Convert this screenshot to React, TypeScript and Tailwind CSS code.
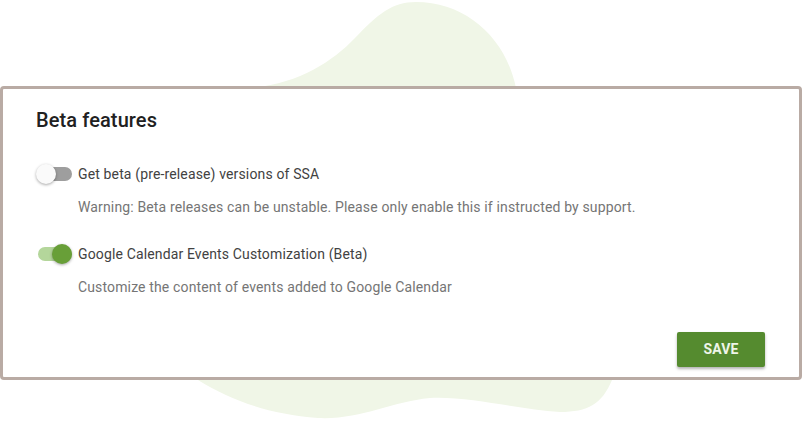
import React, { useState } from 'react';

function Toggle({ on, onChange }: { on: boolean; onChange: () => void }) {
  return (
    <button
      type="button"
      onClick={onChange}
      className="relative w-[36px] h-[20px] flex items-center shrink-0"
    >
      <span className={`absolute left-[2px] right-0 h-[14px] rounded-full ${on ? 'bg-[#b4d69b]' : 'bg-[#9e9e9e]'}`} />
      <span
        className={`absolute top-0 w-[20px] h-[20px] rounded-full shadow-[0_1px_3px_rgba(0,0,0,0.35)] ${on ? 'left-[16px] bg-[#689f38]' : 'left-0 bg-[#fafafa]'}`}
      />
    </button>
  );
}

export default function App() {
  const [beta, setBeta] = useState(false);
  const [calendar, setCalendar] = useState(true);

  return (
    <div className="relative w-[803px] h-[425px] bg-white overflow-hidden" style={{ fontFamily: 'Roboto, "Liberation Sans", sans-serif' }}>
      {/* background blob */}
      <svg className="absolute inset-0" width="803" height="425" viewBox="0 0 803 425">
        <path
          d="M250 88 C298 84 332 62 355 38 C378 14 392 2 416 2 C466 2 506 38 516 88 L612 380 C602 404 588 412 560 412 C520 410 470 396 430 398 C390 402 360 420 318 418 C268 414 230 400 198 380 Z"
          fill="#f0f6e7"
        />
      </svg>

      <div className="relative pt-[86px] pr-[1px]">
        <div className="bg-white border-[3px] border-[#b9aba4] rounded-[4px] h-[294px] px-[33px] pt-[17px] flex flex-col tracking-[0.14px]">
          <h2 className="text-[20px] leading-[28px] font-medium text-[#212121] tracking-[0.1px]">Beta features</h2>

          <div className="mt-[30px] flex items-center gap-[6px]">
            <Toggle on={beta} onChange={() => setBeta(!beta)} />
            <span className="text-[14px] leading-[20px] text-[#424242]">Get beta (pre-release) versions of SSA</span>
          </div>
          <p className="mt-[13px] ml-[42px] text-[14px] leading-[20px] text-[#757575]">
            Warning: Beta releases can be unstable. Please only enable this if instructed by support.
          </p>

          <div className="mt-[27px] flex items-center gap-[6px]">
            <Toggle on={calendar} onChange={() => setCalendar(!calendar)} />
            <span className="text-[14px] leading-[20px] text-[#424242]">Google Calendar Events Customization (Beta)</span>
          </div>
          <p className="mt-[13px] ml-[42px] text-[14px] leading-[20px] text-[#757575]">
            Customize the content of events added to Google Calendar
          </p>

          <div className="flex justify-end mt-[35px] pr-[1px]">
            <button className="w-[88px] h-[35px] bg-[#558b2f] text-[#eef5e8] text-[14px] font-bold rounded-[2px] shadow-[0_2px_3px_rgba(0,0,0,0.3)]">
              SAVE
            </button>
          </div>
        </div>
      </div>
    </div>
  );
}
